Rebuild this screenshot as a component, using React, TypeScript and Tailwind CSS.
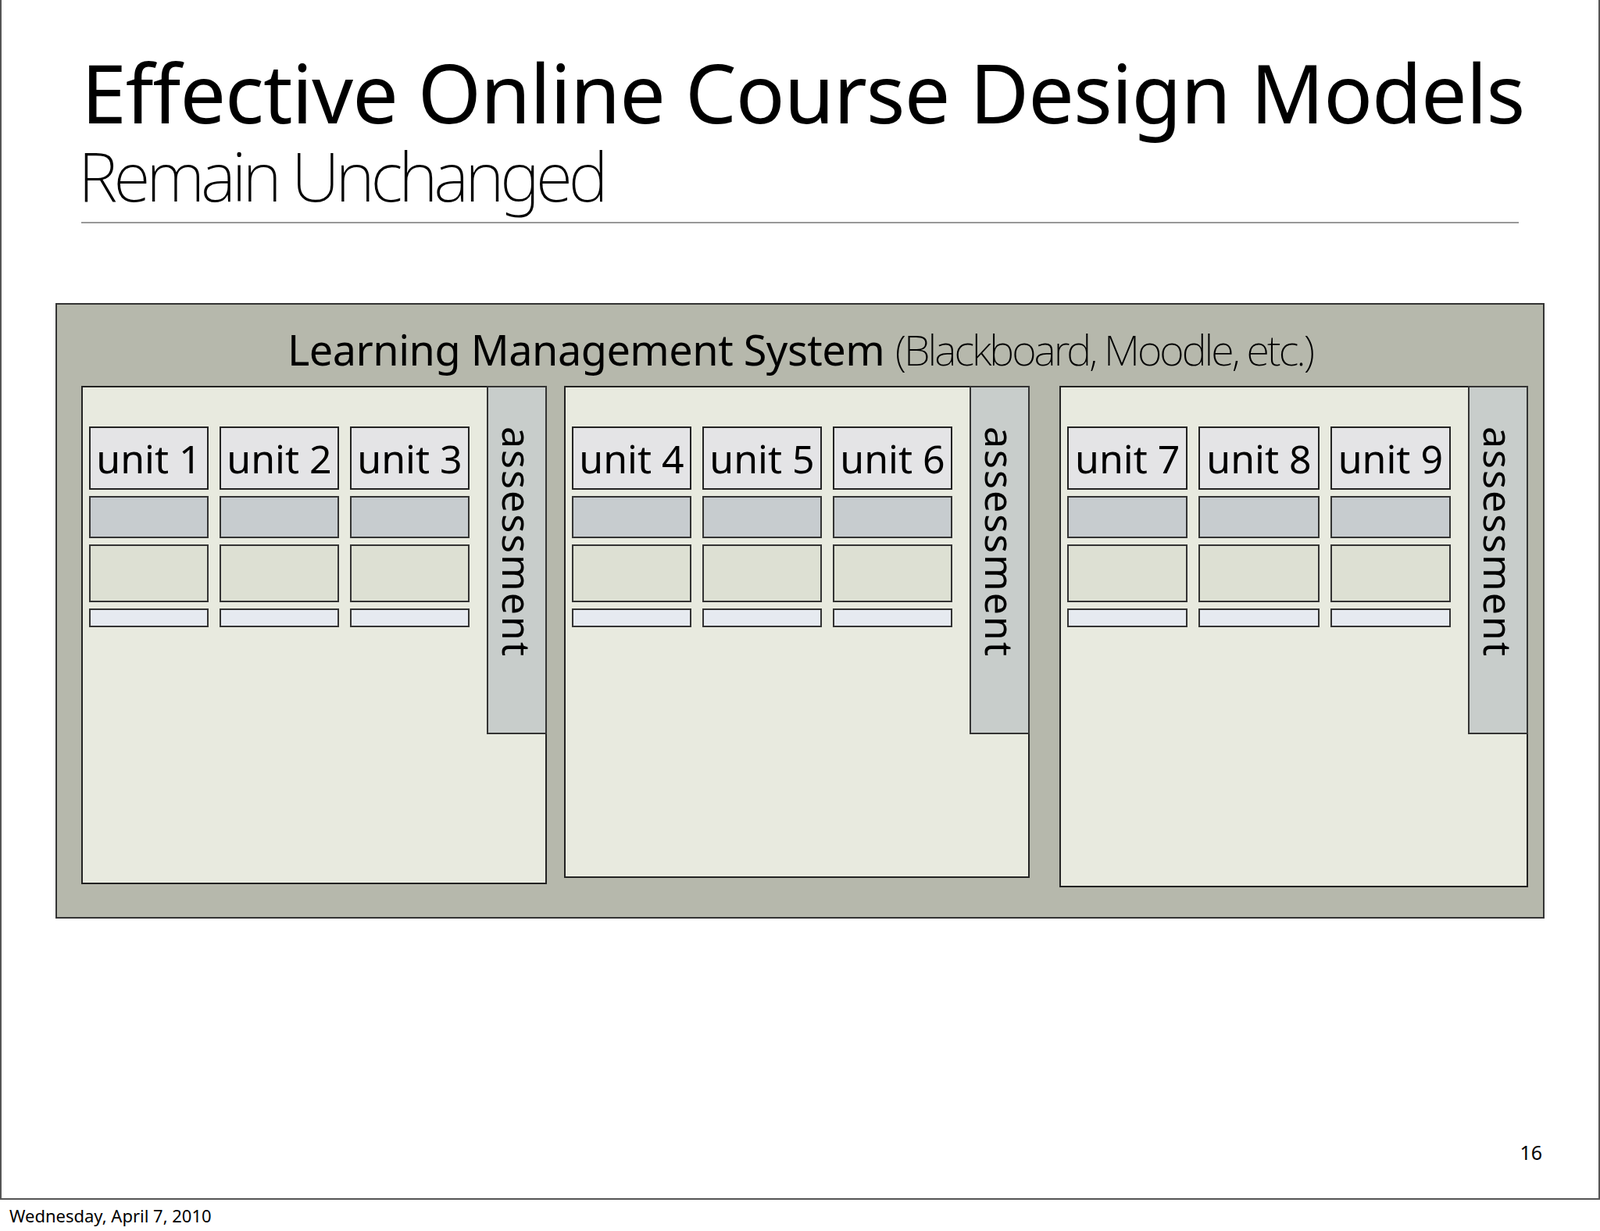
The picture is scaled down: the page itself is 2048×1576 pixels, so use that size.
const Col = ({ n }: { n: number }) => (
  <div className="flex flex-col gap-[8px]">
    <div className="h-[81px] border-2 border-[#222] bg-[#e4e4e6] flex items-center justify-center text-[50px] leading-none text-black">
      unit {n}
    </div>
    <div className="h-[54px] border-2 border-[#333] bg-[#c7cccf]" />
    <div className="h-[74px] border-2 border-[#333] bg-[#dde0d3]" />
    <div className="h-[24px] border-2 border-[#333] bg-[#e6eaf0]" />
  </div>
);

const Panel = ({ start, w, h }: { start: number; w: string; h: string }) => (
  <div className={`${w} ${h} border-2 border-[#222] bg-[#e8eadf] flex`}>
    <div className="flex-1 grid grid-cols-3 gap-[14px] pl-[8px] pr-[22px] pt-[50px] content-start">
      {[0, 1, 2].map((i) => (
        <Col key={i} n={start + i} />
      ))}
    </div>
    <div className="w-[77px] h-[446px] -mt-[2px] -mr-[2px] border-2 border-[#333] bg-[#c8cdcb] flex justify-center pt-[50px]">
      <span className="[writing-mode:vertical-rl] text-[50px] leading-none tracking-[2px] text-black">assessment</span>
    </div>
  </div>
);

export default function App() {
  return (
    <div className="w-[2048px] h-[1576px] bg-white font-[family-name:'Liberation_Sans',Arial,sans-serif] text-black">
      <div className="h-[1536px] border-2 border-[#555] border-t-0 px-[102px] pt-[66px] flex flex-col">
        <h1 className="text-[104px] leading-[1] tracking-[-1px] whitespace-nowrap">Effective Online Course Design Models</h1>
        <h2 className="font-[family-name:'Inter',sans-serif] font-extralight text-[86px] leading-[1] tracking-[-5px] mt-[12px] ml-[-4px]">
          Remain Unchanged
        </h2>
        <div className="h-[2px] bg-[#999] mt-[16px]" />
        <div className="mt-[102px] -mx-[33px] h-[788px] border-2 border-[#333] bg-[#b6b8ac] flex flex-col">
          <div className="text-center text-[54px] leading-none pt-[30px] h-[104px] tracking-[-0.5px]">
            Learning Management System{" "}
            <span className="font-[family-name:'Inter',sans-serif] font-extralight tracking-[-3px]">(Blackboard, Moodle, etc.)</span>
          </div>
          <div className="flex items-start pl-[31px] gap-[22px]">
            <Panel start={1} w="w-[596px]" h="h-[638px]" />
            <Panel start={4} w="w-[596px]" h="h-[630px]" />
            <div className="ml-[16px]">
              <Panel start={7} w="w-[600px]" h="h-[642px]" />
            </div>
          </div>
        </div>
        <div className="text-right text-[25px] mt-auto mb-[40px] mr-[-30px]">16</div>
      </div>
      <div className="text-[22px] pl-[12px] pt-[4px]">Wednesday, April 7, 2010</div>
    </div>
  );
}
